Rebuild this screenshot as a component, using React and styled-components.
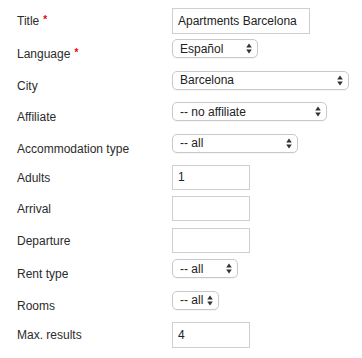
import React from "react";
import styled, { createGlobalStyle } from "styled-components";

const Global = createGlobalStyle`
  html, body { margin: 0; padding: 0; background: #fff; }
  body { font-family: "Liberation Sans", Arial, Helvetica, sans-serif; font-size: 12px; color: #333; }
`;

const Form = styled.form`
  display: grid;
  grid-template-columns: 155px 1fr;
  grid-auto-rows: 26px;
  row-gap: 5.4px;
  padding: 8px 0 0 17px;
`;

const Label = styled.label`
  display: flex;
  align-items: center;
  height: 26px;
  padding-top: ${(p) => (p.$select ? 4 : 0)}px;
  box-sizing: border-box;
  font-size: 12px;
  color: #2b2b2b;
  white-space: nowrap;
`;

const Req = styled.span`
  color: #e00;
  font-size: 10px;
  font-weight: bold;
  margin-left: 4px;
  position: relative;
  top: -2px;
`;

const Field = styled.div`
  display: flex;
  align-items: flex-start;
`;

const TextInput = styled.input`
  box-sizing: border-box;
  width: ${(p) => p.$w}px;
  height: ${(p) => p.$h}px;
  border: 1px solid #cfcfcf;
  border-radius: 0;
  padding: 0 5px;
  font-family: inherit;
  font-size: 12px;
  color: #222;
  background: #fff;
  outline: none;
`;

const SelectWrap = styled.div`
  position: relative;
  width: ${(p) => p.$w}px;
  height: 19px;
`;

const Select = styled.select`
  appearance: none;
  -webkit-appearance: none;
  box-sizing: border-box;
  width: 100%;
  height: 19px;
  border: 1px solid #c9c9c9;
  border-radius: 5px;
  background: #fff;
  padding: 0 12px 0 7px;
  font-family: inherit;
  font-size: 12px;
  color: #222;
  outline: none;
  text-overflow: clip;
  box-shadow: 0 1px 0 rgba(0, 0, 0, 0.04);
`;

const Arrows = styled.svg`
  position: absolute;
  right: 6px;
  top: 4px;
  pointer-events: none;
`;

function SelectBox({ w, value }) {
  return (
    <SelectWrap $w={w}>
      <Select defaultValue={value}>
        <option value={value}>{value}</option>
      </Select>
      <Arrows width="6" height="11" viewBox="0 0 6 11">
        <path d="M3 0.5 L5.8 4.5 H0.2 Z" fill="#333" />
        <path d="M3 10.5 L5.8 6.5 H0.2 Z" fill="#333" />
      </Arrows>
    </SelectWrap>
  );
}

const rows = [
  { label: "Title", req: true, type: "input", w: 138, h: 26, value: "Apartments Barcelona" },
  { label: "Language", req: true, type: "select", w: 86, value: "Español" },
  { label: "City", type: "select", w: 177, value: "Barcelona" },
  { label: "Affiliate", type: "select", w: 155, value: "-- no affiliate" },
  { label: "Accommodation type", type: "select", w: 126, value: "-- all" },
  { label: "Adults", type: "input", w: 78, h: 25, value: "1" },
  { label: "Arrival", type: "input", w: 78, h: 25, value: "" },
  { label: "Departure", type: "input", w: 78, h: 25, value: "" },
  { label: "Rent type", type: "select", w: 66, value: "-- all" },
  { label: "Rooms", type: "select", w: 47, value: "-- all" },
  { label: "Max. results", type: "input", w: 78, h: 26, value: "4" },
];

export default function App() {
  return (
    <>
      <Global />
      <Form onSubmit={(e) => e.preventDefault()}>
        {rows.map((r) => (
          <React.Fragment key={r.label}>
            <Label $select={r.type === "select"}>
              {r.label}
              {r.req && <Req>*</Req>}
            </Label>
            <Field>
              {r.type === "input" ? (
                <TextInput $w={r.w} $h={r.h} defaultValue={r.value} />
              ) : (
                <SelectBox w={r.w} value={r.value} />
              )}
            </Field>
          </React.Fragment>
        ))}
      </Form>
    </>
  );
}
